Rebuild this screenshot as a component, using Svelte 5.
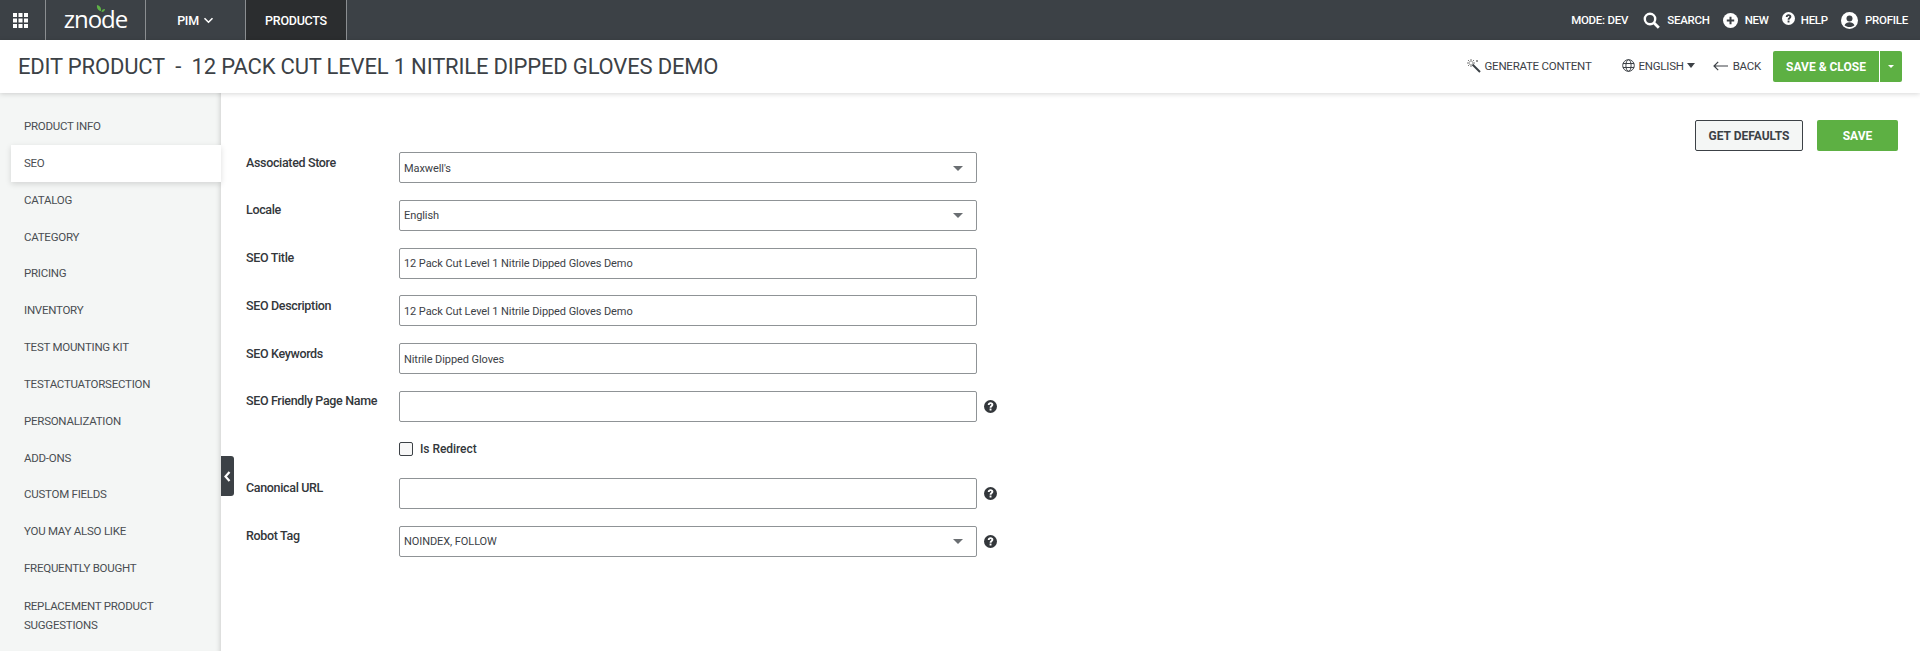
<script>
    const menu = ["Product Info", "SEO", "Catalog", "Category", "Pricing", "Inventory", "Test Mounting Kit", "TestActuatorSection", "Personalization", "Add-Ons", "Custom Fields", "You May Also Like", "Frequently Bought", "Replacement Product Suggestions"];

    const fields = [
        { label: "Associated Store", value: "Maxwell's", select: true },
        { label: "Locale", value: "English", select: true },
        { label: "SEO Title", value: "12 Pack Cut Level 1 Nitrile Dipped Gloves Demo" },
        { label: "SEO Description", value: "12 Pack Cut Level 1 Nitrile Dipped Gloves Demo" },
        { label: "SEO Keywords", value: "Nitrile Dipped Gloves" },
        { label: "SEO Friendly Page Name", value: "", help: true },
        { check: "Is Redirect" },
        { label: "Canonical URL", value: "", help: true },
        { label: "Robot Tag", value: "NOINDEX, FOLLOW", select: true, help: true }
    ];
</script>

{#snippet helpIcon(size)}
    <svg width={size} height={size} viewBox="0 0 16 16"><circle cx="8" cy="8" r="8" fill="currentColor" /><path d="M4.600 6C4.700 4 6.200 2.900 8.100 2.900c2 0 3.400 1.200 3.400 2.800 0 2.300-2.300 2.300-2.300 3.900H6.900c0-2.800 2.200-2.700 2.200-3.700 0-.5-.4-.9-1-.9-.7 0-1.100.4-1.200 1.200z" fill="#fff" /><rect x="6.900" y="10.500" width="2.300" height="2.400" fill="#fff" /></svg>
{/snippet}

<div class="page">
    <header class="topbar">
        <div class="apps">
            <svg width="15" height="15" viewBox="0 0 15 15" fill="#fff"><rect width="4" height="4" /><rect x="5.500" width="4" height="4" /><rect x="11" width="4" height="4" /><rect y="5.500" width="4" height="4" /><rect x="5.500" y="5.500" width="4" height="4" /><rect x="11" y="5.500" width="4" height="4" /><rect y="11" width="4" height="4" /><rect x="5.500" y="11" width="4" height="4" /><rect x="11" y="11" width="4" height="4" /></svg>
        </div>
        <div class="logo">
            <span>znode</span>
            <svg class="leaf" width="9" height="9" viewBox="0 0 9 9"><path d="M1 0c3 .5 4.500 2.500 4 6C2.500 6 .5 3.500 1 0zM5.500 7c0-2 1.200-3 3.500-3-.2 2-1.500 3.200-3.500 3z" fill="#5fb246" /></svg>
        </div>
        <div class="nav pim">PIM
            <svg width="11" height="7" viewBox="0 0 11 7"><path d="M1.500 1.200l4 4 4-4" fill="none" stroke="#fff" stroke-width="1.600" /></svg>
        </div>
        <div class="nav products">PRODUCTS</div>
        <div class="tools">
            <span class="mode">MODE: DEV</span>
            <span class="tool search">
                <svg width="17" height="17" viewBox="0 0 17 17"><circle cx="7" cy="7" r="5.200" fill="none" stroke="#fff" stroke-width="2.400" /><path d="M10.800 10.800l5 5" stroke="#fff" stroke-width="2.800" /></svg>
                SEARCH
            </span>
            <span class="tool new">
                <svg width="15" height="15" viewBox="0 0 15 15"><circle cx="7.500" cy="7.500" r="7.500" fill="#fff" /><path d="M7.500 3.800v7.400M3.800 7.500h7.400" stroke="#3c4146" stroke-width="2" /></svg>
                NEW
            </span>
            <span class="tool help">
                <span class="help-top">{@render helpIcon(13)}</span>
                HELP
            </span>
            <span class="tool">
                <svg width="17" height="17" viewBox="0 0 17 17"><circle cx="8.500" cy="8.500" r="8.500" fill="#fff" /><circle cx="8.500" cy="6.500" r="3" fill="#3c4146" /><path d="M3.500 13.200c.8-2 2.800-3 5-3s4.200 1 5 3c-1.300 1.200-3 1.800-5 1.800s-3.700-.6-5-1.800z" fill="#3c4146" /></svg>
                PROFILE
            </span>
        </div>
    </header>

    <div class="titlebar">
        <h1>EDIT PRODUCT &nbsp;-&nbsp; 12 PACK CUT LEVEL 1 NITRILE DIPPED GLOVES DEMO</h1>
        <div class="actions">
            <span class="act generate">
                <svg width="14" height="14" viewBox="0 0 14 14"><path d="M5.500 5.500l7.500 7.500" stroke="#3c4146" stroke-width="2" /><path d="M4 0v3M4 5v3M0 4h3M5 4h3M1 1l1.500 1.500M7 1L5.500 2.500M1 7l1.500-1.500M10 1v2M9 2h2" stroke="#777" stroke-width="1" /></svg>
                GENERATE CONTENT
            </span>
            <span class="act lang">
                <svg width="13" height="13" viewBox="0 0 13 13" fill="none" stroke="#3c4146" stroke-width="1"><circle cx="6.500" cy="6.500" r="5.800" /><ellipse cx="6.500" cy="6.500" rx="2.600" ry="5.800" /><path d="M1 4.500h11M1 8.500h11" /></svg>
                ENGLISH
                <i class="caret"></i>
            </span>
            <span class="act back">
                <svg width="15" height="10" viewBox="0 0 15 10" fill="none" stroke="#3c4146" stroke-width="1.200"><path d="M15 5H1M5.200 .8L1 5l4.200 4.200" /></svg>
                BACK
            </span>
            <div class="split">
                <span class="split-main">SAVE &amp; CLOSE</span>
                <span class="split-toggle"><i></i></span>
            </div>
        </div>
    </div>

    <div class="body">
        <nav class="side">
            {#each menu as item, i}
                <div class="item" class:active={i === 1}>{item}</div>
            {/each}
        </nav>
        <button class="collapse" aria-label="Collapse">
            <svg width="7" height="11" viewBox="0 0 7 11"><path d="M5.500 1L1.500 5.500l4 4.500" fill="none" stroke="#fff" stroke-width="2.200" /></svg>
        </button>
        <main class="content">
            <form class="form">
                {#each fields as f}
                    {#if f.check}
                        <div class="row check-row">
                            <label class="label" for="redirect"></label>
                            <input id="redirect" type="checkbox" />
                            <span class="check-label">{f.check}</span>
                        </div>
                    {:else}
                        <div class="row">
                            <span class="label">{f.label}</span>
                            <div class="box">
                                <span>{f.value}</span>
                                {#if f.select}<i class="arrow"></i>{/if}
                            </div>
                            {#if f.help}<span class="help-mark">{@render helpIcon(13)}</span>{/if}
                        </div>
                    {/if}
                {/each}
            </form>
            <div class="buttons">
                <span class="btn defaults">GET DEFAULTS</span>
                <span class="btn save">SAVE</span>
            </div>
        </main>
    </div>
</div>

<style>
    :global(body) {
        margin: 0;
        background: #fff;
        font-family: Roboto, "Liberation Sans", sans-serif;
        overflow: hidden;
    }

    .page {
        height: 651px;
        display: flex;
        flex-direction: column;
        overflow: hidden;
        color: #3c4146;
    }

    .topbar {
        height: 40px;
        flex: none;
        display: flex;
        align-items: stretch;
        background: #3c4146;
        color: #fff;
        font-size: 11.500px;
        letter-spacing: -0.25px;
    }

    .apps {
        width: 46px;
        box-sizing: border-box;
        padding-right: 4px;
        display: flex;
        align-items: center;
        justify-content: center;
        border-right: 1px solid #8b8e91;
    }

    .logo {
        position: relative;
        width: 100px;
        border-right: 1px solid #8b8e91;
        display: flex;
        align-items: center;
        justify-content: center;
        font-family: "Open Sans", sans-serif;
        font-weight: 400;
        font-size: 24px;
        letter-spacing: -1px;
        padding-bottom: 3px;
        box-sizing: border-box;
    }

    .leaf {
        position: absolute;
        left: 50px;
        top: 5px;
    }

    .nav {
        display: flex;
        align-items: center;
        justify-content: center;
        box-sizing: border-box;
        font-size: 12.500px;
        font-weight: 500;
        border-right: 1px solid #8b8e91;
    }

    .pim {
        width: 100px;
        gap: 4px;
    }

    .products {
        width: 101px;
        background: #2b2d2f;
    }

    .tools {
        margin-left: auto;
        display: flex;
        align-items: center;
        padding-right: 12px;
        font-weight: 500;
    }

    .mode {
        margin-right: 15px;
    }

    .tool {
        display: flex;
        align-items: center;
        gap: 7px;
        margin-right: 13px;
    }

    .tool:last-child {
        margin-right: 0;
    }

    .help {
        gap: 6px;
    }

    .help-top {
        display: flex;
        color: #fff;
        margin-bottom: 4px;
    }

    .help-top :global(path), .help-top :global(rect) {
        fill: #3c4146;
    }

    .titlebar {
        height: 53px;
        flex: none;
        display: flex;
        align-items: center;
        justify-content: space-between;
        padding: 0 18px;
        background: #fff;
        box-shadow: 0 1px 5px rgba(0, 0, 0, 0.16);
        position: relative;
        z-index: 2;
    }

    h1 {
        margin: 0 0 1px;
        font-size: 22px;
        font-weight: 400;
        letter-spacing: -0.18px;
        color: #3c4146;
        white-space: nowrap;
    }

    .actions {
        display: flex;
        align-items: center;
        font-size: 11.500px;
    }

    .act {
        display: flex;
        align-items: center;
        gap: 4px;
        letter-spacing: -0.25px;
        margin-bottom: 2px;
    }

    .generate {
        margin-right: 30px;
    }

    .lang {
        margin-right: 18px;
    }

    .back {
        margin-right: 12px;
        gap: 5px;
    }

    .caret {
        border: 4px solid transparent;
        border-top: 5px solid #3c4146;
        border-bottom: 0;
        margin-left: -1px;
    }

    .split {
        display: flex;
        height: 31px;
        color: #fff;
        font-size: 12px;
        font-weight: 700;
    }

    .split-main {
        width: 106px;
        background: #5db043;
        border-radius: 2px 0 0 2px;
        display: flex;
        align-items: center;
        justify-content: center;
    }

    .split-toggle {
        width: 22px;
        margin-left: 1px;
        background: #5db043;
        border-radius: 0 2px 2px 0;
        display: flex;
        align-items: center;
        justify-content: center;
    }

    .split-toggle i {
        border: 3px solid transparent;
        border-top: 3px solid #fff;
        border-bottom: 0;
    }

    .body {
        flex: 1;
        display: flex;
        position: relative;
        min-height: 0;
    }

    .side {
        width: 221px;
        flex: none;
        box-sizing: border-box;
        padding: 15px 0 0 11px;
        background: #f4f6f5;
        box-shadow: inset -5px 0 5px -4px rgba(0, 0, 0, 0.16);
        font-size: 11.500px;
        letter-spacing: -0.25px;
    }

    .item {
        padding: 11px 40px 11px 13px;
        line-height: 14.850px;
        text-transform: uppercase;
        color: #4a4e52;
    }

    .item:last-child {
        line-height: 19px;
        padding-top: 10px;
    }

    .item.active {
        background: #fff;
        box-shadow: 0 2px 6px rgba(0, 0, 0, 0.14);
    }

    .collapse {
        position: absolute;
        left: 221px;
        top: 363px;
        width: 13px;
        height: 40px;
        padding: 0;
        border: 0;
        border-radius: 0 3px 3px 0;
        background: #3c4146;
        display: flex;
        align-items: center;
        justify-content: center;
    }

    .content {
        flex: 1;
        display: flex;
        justify-content: space-between;
        padding: 27px 22px 0 25px;
    }

    .form {
        padding-top: 32px;
    }

    .row {
        display: flex;
        align-items: flex-start;
        height: 47.800px;
        font-size: 12.500px;
    }

    .label {
        width: 153px;
        flex: none;
        font-weight: 500;
        letter-spacing: -0.34px;
        color: #33373b;
        line-height: 15px;
        padding-top: 2.500px;
        white-space: nowrap;
    }

    .box {
        width: 578px;
        height: 31px;
        box-sizing: border-box;
        border: 1px solid #8f9396;
        border-radius: 2px;
        display: flex;
        align-items: center;
        justify-content: space-between;
        padding: 1px 13px 0 4px;
        font-size: 11px;
        letter-spacing: -0.08px;
        color: #3c4146;
    }

    .arrow {
        border: 5px solid transparent;
        border-top: 5px solid #6a6e72;
        border-bottom: 0;
    }

    .help-mark {
        display: flex;
        margin: 9px 0 0 7px;
        color: #33373b;
    }

    .check-row {
        height: 39px;
        padding-top: 3px;
        box-sizing: border-box;
    }

    .check-row input {
        appearance: none;
        width: 14px;
        height: 14px;
        margin: 0;
        box-sizing: border-box;
        border: 1px solid #3c4146;
        border-radius: 2px;
        background: #f7f7f7;
    }

    .check-label {
        margin-left: 7px;
        font-weight: 500;
        color: #33373b;
        font-size: 12px;
        letter-spacing: -0.05px;
    }

    .buttons {
        display: flex;
        gap: 14px;
    }

    .btn {
        height: 31px;
        box-sizing: border-box;
        display: flex;
        align-items: center;
        justify-content: center;
        font-size: 12px;
        font-weight: 700;
        border-radius: 2px;
    }

    .defaults {
        width: 108px;
        border: 1px solid #3c4146;
        background: #f4f6f5;
        color: #3c4146;
    }

    .save {
        width: 81px;
        background: #5db043;
        color: #fff;
    }
</style>
